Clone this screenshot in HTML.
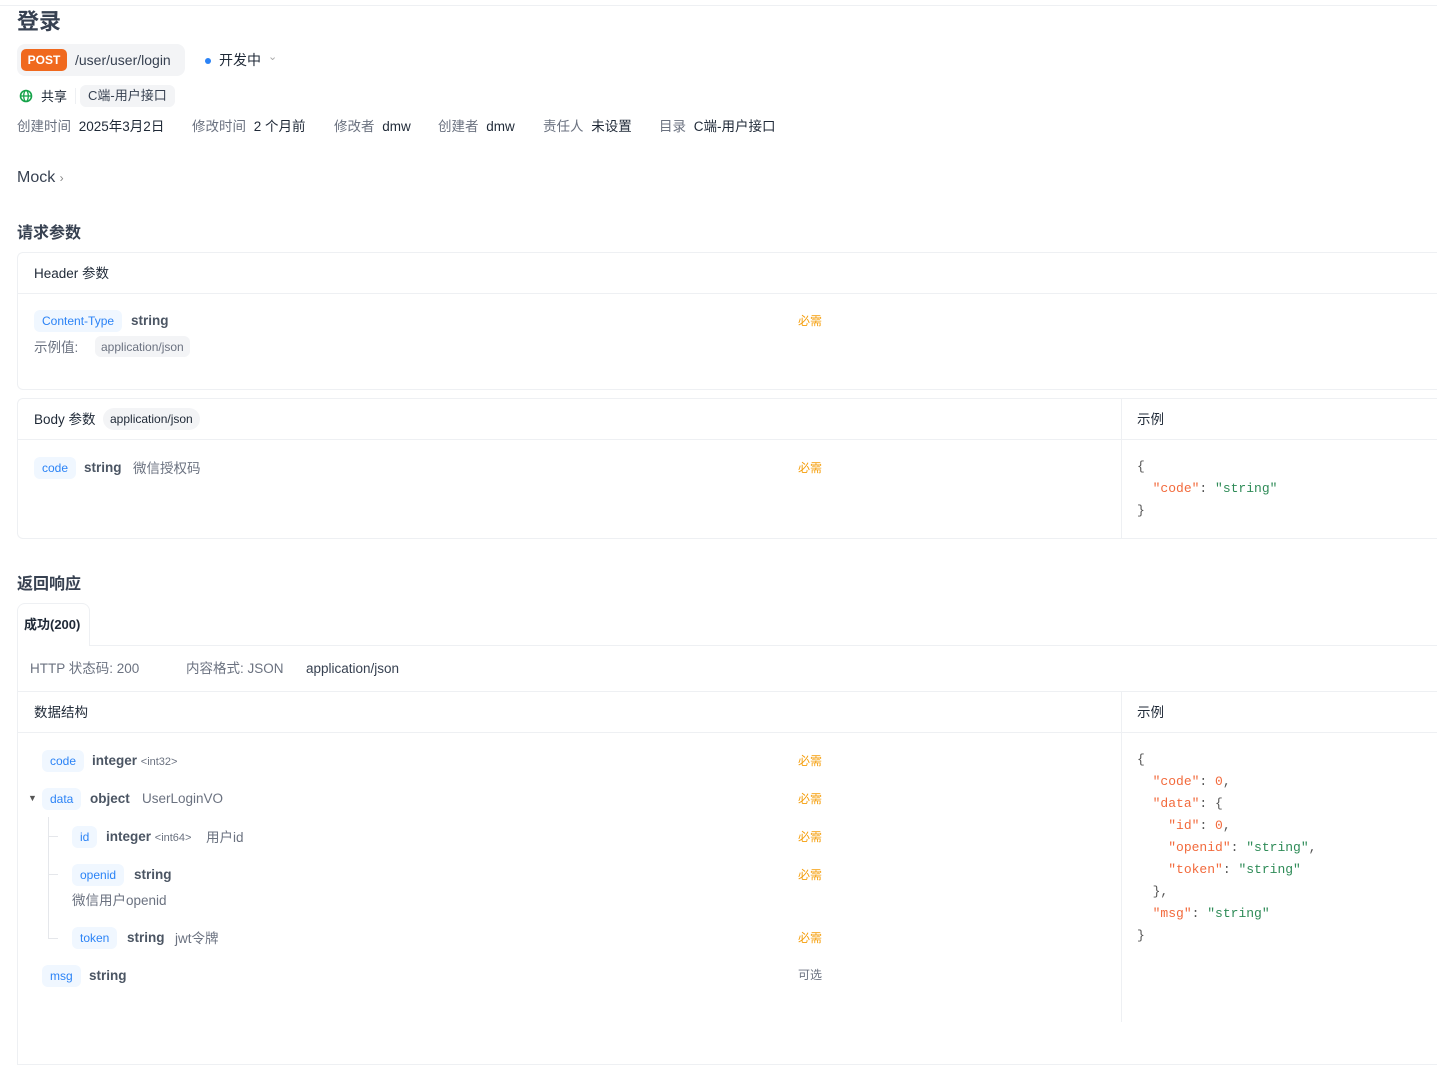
<!DOCTYPE html>
<html><head><meta charset="utf-8"><style>
*{margin:0;padding:0;box-sizing:border-box}
body{width:1437px;height:1017px;overflow:hidden;background:#fff;font-family:"Liberation Sans","Noto Sans CJK SC",sans-serif;color:#374151;font-size:13px;position:relative}
.a{position:absolute;white-space:nowrap}
.g{color:#6b7280}
.d{color:#1f2937}
.tag{position:absolute;background:#f0f7ff;color:#2b83f6;border-radius:6px;font-size:12px;height:22px;line-height:22px;padding:0 8px}
.req{position:absolute;color:#f59e0b;font-size:12px}
.box{position:absolute;border:1px solid #eef0f3;border-radius:6px;border-right:none}
.hl{position:absolute;height:1px;background:#eef0f3}
.vl{position:absolute;width:1px;background:#eef0f3}
.mono{font-family:"Liberation Mono","DejaVu Sans Mono",monospace;font-size:13px;line-height:22px;color:#555}
.k{color:#f26a3c}.s{color:#2e8b57}.n{color:#f26a3c}
.ty{color:#4b5563;font-weight:bold;font-size:13.5px}
</style></head><body>
<div class="hl" style="left:0;top:5px;width:1437px"></div>
<div class="a d" style="left:17px;top:4px;font-size:22px;font-weight:bold;color:#374151">登录</div>
<div class="a" style="left:17px;top:44px;width:168px;height:32px;background:#f3f4f6;border-radius:8px"></div>
<div class="a" style="left:21px;top:49px;width:46px;height:22px;background:#f0691e;border-radius:5px;color:#fff;font-weight:bold;font-size:12px;line-height:22px;text-align:center">POST</div>
<div class="a d" style="left:75px;top:52px;font-size:14px;color:#374151">/user/user/login</div>
<div class="a" style="left:205px;top:58px;width:6px;height:6px;border-radius:50%;background:#2b83f6"></div>
<div class="a d" style="left:219px;top:50px;font-size:14px">开发中</div>
<div class="a" style="left:268px;top:50px;color:#aaa;font-size:11px">&#8964;</div>
<svg class="a" style="left:19px;top:89px" width="14" height="14" viewBox="0 0 14 14"><circle cx="7" cy="7" r="5.5" fill="none" stroke="#16a34a" stroke-width="1.6"/><ellipse cx="7" cy="7" rx="2.3" ry="5.5" fill="none" stroke="#16a34a" stroke-width="1.3"/><line x1="1.5" y1="7" x2="12.5" y2="7" stroke="#16a34a" stroke-width="1.3"/></svg>
<div class="a d" style="left:41px;top:86px">共享</div>
<div class="vl" style="left:75px;top:88px;height:16px"></div>
<div class="a" style="left:80px;top:85px;height:22px;padding:0 8px;background:#f3f4f6;border-radius:6px;line-height:21px;color:#374151">C端-用户接口</div>
<div class="a g" style="left:17px;top:115px;font-size:13.5px">创建时间 <span class="d" style="margin-left:4px">2025年3月2日</span></div>
<div class="a g" style="left:192px;top:115px;font-size:13.5px">修改时间 <span class="d" style="margin-left:4px">2 个月前</span></div>
<div class="a g" style="left:334px;top:115px;font-size:13.5px">修改者 <span class="d" style="margin-left:4px">dmw</span></div>
<div class="a g" style="left:438px;top:115px;font-size:13.5px">创建者 <span class="d" style="margin-left:4px">dmw</span></div>
<div class="a g" style="left:543px;top:115px;font-size:13.5px">责任人 <span class="d" style="margin-left:4px">未设置</span></div>
<div class="a g" style="left:659px;top:115px;font-size:13.5px">目录 <span class="d" style="margin-left:4px">C端-用户接口</span></div>
<div class="a" style="left:17px;top:169px;font-size:16px;color:#374151">Mock <span style="font-size:12px;color:#888">›</span></div>
<div class="a" style="left:17px;top:219px;font-size:16px;font-weight:bold;color:#374151">请求参数</div>

<div class="box" style="left:17px;top:252px;width:1430px;height:138px"></div>
<div class="a d" style="left:34px;top:262px;font-size:13.5px">Header 参数</div>
<div class="hl" style="left:18px;top:293px;width:1419px"></div>
<div class="tag" style="left:34px;top:310px">Content-Type</div>
<div class="a ty" style="left:131px;top:313px">string</div>
<div class="req" style="left:798px;top:312px">必需</div>
<div class="a g" style="left:34px;top:336px;font-size:13.5px">示例值:</div>
<div class="a" style="left:95px;top:336px;height:21px;line-height:22px;padding:0 6px;background:#f3f4f6;border-radius:6px;font-size:12px;color:#6b7280">application/json</div>

<div class="box" style="left:17px;top:398px;width:1430px;height:141px"></div>
<div class="a d" style="left:34px;top:408px;font-size:13.5px">Body 参数</div>
<div class="a" style="left:103px;top:408px;height:22px;line-height:23px;padding:0 7px;background:#f3f4f6;border-radius:11px;font-size:12px;color:#1f2937">application/json</div>
<div class="vl" style="left:1121px;top:399px;height:140px"></div>
<div class="a d" style="left:1137px;top:408px;font-size:13.5px">示例</div>
<div class="hl" style="left:18px;top:439px;width:1419px"></div>
<div class="tag" style="left:34px;top:457px">code</div>
<div class="a ty" style="left:84px;top:460px">string</div>
<div class="a g" style="left:133px;top:457px;font-size:13.5px">微信授权码</div>
<div class="req" style="left:798px;top:459px">必需</div>
<div class="a mono" style="left:1137px;top:456px">{<br>&nbsp;&nbsp;<span class="k">"code"</span>: <span class="s">"string"</span><br>}</div>

<div class="a" style="left:17px;top:570px;font-size:16px;font-weight:bold;color:#374151">返回响应</div>
<div class="a" style="left:17px;top:603px;width:73px;height:43px;border:1px solid #eef0f3;border-bottom:none;border-radius:8px 8px 0 0;background:#fff;z-index:2"></div>
<div class="a" style="left:24px;top:614px;font-size:13px;font-weight:bold;color:#1f2937;z-index:3">成功(200)</div>
<div class="box" style="left:17px;top:645px;width:1430px;height:420px;border-radius:0"></div>
<div class="a g" style="left:30px;top:657px;font-size:13.5px">HTTP 状态码: 200</div>
<div class="a g" style="left:186px;top:657px;font-size:13.5px">内容格式: JSON</div>
<div class="a" style="left:306px;top:661px;font-size:13.5px;color:#374151">application/json</div>
<div class="hl" style="left:18px;top:691px;width:1419px"></div>
<div class="a d" style="left:34px;top:701px;font-size:13.5px">数据结构</div>
<div class="vl" style="left:1121px;top:692px;height:330px"></div>
<div class="a d" style="left:1137px;top:701px;font-size:13.5px">示例</div>
<div class="hl" style="left:18px;top:732px;width:1419px"></div>

<div class="tag" style="left:42px;top:750px">code</div>
<div class="a ty" style="left:92px;top:753px">integer <span style="font-weight:normal;font-size:11px;color:#6b7280">&lt;int32&gt;</span></div>
<div class="req" style="left:798px;top:752px">必需</div>

<div class="a" style="left:28px;top:793px;font-size:9px;color:#555">▼</div>
<div class="tag" style="left:42px;top:788px">data</div>
<div class="a ty" style="left:90px;top:791px">object</div>
<div class="a g" style="left:142px;top:791px;font-size:13.5px">UserLoginVO</div>
<div class="req" style="left:798px;top:790px">必需</div>

<div class="vl" style="left:48px;top:817px;height:122px;background:#e5e7eb"></div>
<div class="hl" style="left:48px;top:836px;width:10px;background:#e5e7eb"></div>
<div class="hl" style="left:48px;top:874px;width:10px;background:#e5e7eb"></div>
<div class="hl" style="left:48px;top:938px;width:10px;background:#e5e7eb"></div>

<div class="tag" style="left:72px;top:826px">id</div>
<div class="a ty" style="left:106px;top:829px">integer <span style="font-weight:normal;font-size:11px;color:#6b7280">&lt;int64&gt;</span></div>
<div class="a g" style="left:206px;top:826px;font-size:13.5px">用户id</div>
<div class="req" style="left:798px;top:828px">必需</div>

<div class="tag" style="left:72px;top:864px">openid</div>
<div class="a ty" style="left:134px;top:867px">string</div>
<div class="req" style="left:798px;top:866px">必需</div>
<div class="a g" style="left:72px;top:889px;font-size:13.5px">微信用户openid</div>

<div class="tag" style="left:72px;top:927px">token</div>
<div class="a ty" style="left:127px;top:930px">string</div>
<div class="a g" style="left:175px;top:927px;font-size:13.5px">jwt令牌</div>
<div class="req" style="left:798px;top:929px">必需</div>

<div class="tag" style="left:42px;top:965px">msg</div>
<div class="a ty" style="left:89px;top:968px">string</div>
<div class="a g" style="left:798px;top:966px;font-size:12px">可选</div>

<div class="a mono" style="left:1137px;top:749px">{<br>&nbsp;&nbsp;<span class="k">"code"</span>: <span class="n">0</span>,<br>&nbsp;&nbsp;<span class="k">"data"</span>: {<br>&nbsp;&nbsp;&nbsp;&nbsp;<span class="k">"id"</span>: <span class="n">0</span>,<br>&nbsp;&nbsp;&nbsp;&nbsp;<span class="k">"openid"</span>: <span class="s">"string"</span>,<br>&nbsp;&nbsp;&nbsp;&nbsp;<span class="k">"token"</span>: <span class="s">"string"</span><br>&nbsp;&nbsp;},<br>&nbsp;&nbsp;<span class="k">"msg"</span>: <span class="s">"string"</span><br>}</div>
</body></html>
